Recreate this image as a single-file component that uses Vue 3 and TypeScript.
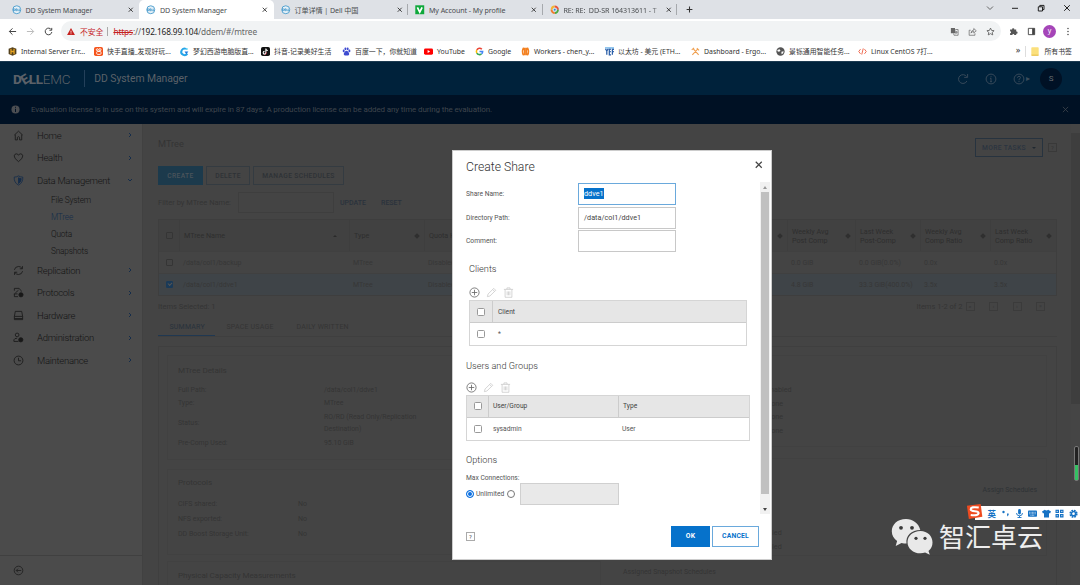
<script setup lang="ts">
interface Tab { kind: string; title: string; active?: boolean; sep?: boolean }
const tabs: Tab[] = [
  { kind: 'dell', title: 'DD System Manager' },
  { kind: 'dell', title: 'DD System Manager', active: true },
  { kind: 'dell', title: '订单详情 | Dell 中国', sep: true },
  { kind: 'v', title: 'My Account - My profile', sep: true },
  { kind: 'ring', title: 'RE: RE:  DD-SR 164313611 - T', sep: true },
]
interface Mark { kind: string; text: string; w: number }
const marks: Mark[] = [
  { kind: 'h', text: 'Internal Server Err...', w: 86 },
  { kind: 'ks', text: '快手直播_发现好玩...', w: 86 },
  { kind: 'c', text: '梦幻西游电脑版直...', w: 81 },
  { kind: 'tt', text: '抖音-记录美好生活', w: 81 },
  { kind: 'paw', text: '百度一下，你就知道', w: 82 },
  { kind: 'yt', text: 'YouTube', w: 51 },
  { kind: 'g', text: 'Google', w: 46 },
  { kind: 'w', text: 'Workers - chen_y...', w: 84 },
  { kind: 'yef', text: '以太坊 - 美元 (ETH...', w: 86 },
  { kind: 'pick', text: 'Dashboard - Ergo...', w: 85 },
  { kind: 'globe', text: '景铄通用智能任务...', w: 82 },
  { kind: 'code', text: 'Linux CentOS 7打...', w: 100 },
]
interface Nav { icon: string; label: string; open?: boolean; subs?: string[] }
const nav: Nav[] = [
  { icon: 'home', label: 'Home' },
  { icon: 'heart', label: 'Health' },
  { icon: 'shield', label: 'Data Management', open: true, subs: ['File System', 'MTree', 'Quota', 'Snapshots'] },
  { icon: 'sync', label: 'Replication' },
  { icon: 'proto', label: 'Protocols' },
  { icon: 'disk', label: 'Hardware' },
  { icon: 'admin', label: 'Administration' },
  { icon: 'clock', label: 'Maintenance' },
]
const rows = [
  { on: false, cells: ['/data/col1/backup', 'MTree', 'Disabled', '', '0.0 GiB', '0.0 GiB(0.0%)', '0.0x', '0.0x'] },
  { on: true, cells: ['/data/col1/ddve1', 'MTree', 'Disabled', '', '4.8 GiB', '33.3 GiB(400.0%)', '3.5x', '3.5x'] },
]
const heads = ['MTree Name', 'Type', 'Quota Hard', '', 'Weekly Avg\nPost Comp', 'Last Week\nPost-Comp', 'Weekly Avg\nComp Ratio', 'Last Week\nComp Ratio']
</script>

<template>
  <div class="screen">
    <div class="tabstrip">
      <div v-for="(t, i) in tabs" :key="i" class="tab" :class="{ active: t.active, sep: t.sep }">
        <svg class="fav" viewBox="0 0 10 10">
          <g v-if="t.kind === 'dell'"><circle cx="5" cy="5" r="4.2" fill="#e6f1f8" stroke="#3f97c9" stroke-width=".9" /><path d="M1.6 3.9v2.2q1.8 0 1.8-1.1T1.6 3.9M5.2 4H4v2h1.2M4 5h1M6 4v2h1M7.6 4v2h1" fill="none" stroke="#2e8bc4" stroke-width=".7" /></g>
          <g v-else-if="t.kind === 'v'"><rect x=".3" y=".3" width="9.4" height="9.4" fill="#0ea83b" /><path d="M2.5 2.4 5 7.4 7.5 2.4" fill="none" stroke="#fff" stroke-width="1.8" /></g>
          <g v-else fill="none" stroke-width="2"><path d="M1.7 5A3.4 3.4 0 0 1 5 1.6" stroke="#f2b632" /><path d="M5 1.6A3.4 3.4 0 0 1 8.4 5" stroke="#e8543c" /><path d="M8.4 5A3.4 3.4 0 0 1 5 8.4" stroke="#4ea83f" /><path d="M5 8.4A3.4 3.4 0 0 1 1.6 5" stroke="#ef7b2f" /><circle cx="5" cy="5" r="1.5" fill="#2e86d0" stroke="#cfe4f5" stroke-width="1" /></g>
        </svg>
        <span class="tabtitle" :class="{ fade: t.kind === 'ring' }">{{ t.title }}</span>
        <svg class="x" viewBox="0 0 6 6"><path d="M.8.8 5.2 5.2M5.2.8.8 5.2" /></svg>
      </div>
      <svg class="plus" viewBox="0 0 8 8"><path d="M4 .7v6.6M.7 4h6.6" /></svg>
      <div class="winbtns">
        <svg viewBox="0 0 10 10"><path d="M2 3.5 5 6.5 8 3.5" stroke="#666" /></svg>
        <svg viewBox="0 0 10 10"><path d="M2 5.3h6" /></svg>
        <svg viewBox="0 0 10 10"><path d="M2.3 3.8h4.2v4.2H2.3zM3.8 3.8V2.4H8v4.2H6.5" /></svg>
        <svg viewBox="0 0 10 10"><path d="M2.2 2.2 7.8 7.8M7.8 2.2 2.2 7.8" /></svg>
      </div>
    </div>

    <div class="toolbar">
      <svg class="tb" viewBox="0 0 10 10"><path d="M9 5H1.5M5 1.5 1.5 5 5 8.5" stroke="#444" /></svg>
      <svg class="tb" viewBox="0 0 10 10"><path d="M1 5h7.5M5 1.5 8.5 5 5 8.5" stroke="#bbb" /></svg>
      <svg class="tb" viewBox="0 0 10 10"><path d="M8.2 3A3.7 3.7 0 1 0 8.7 5.6M8.6 1v2.6H6" stroke="#444" /></svg>
      <div class="omni">
        <svg class="warn" viewBox="0 0 9 8"><path d="M4.5 0 9 8H0z" fill="#c5221f" /><path d="M4.5 3v2.4M4.5 6.1v1" stroke="#fff" stroke-width=".9" /></svg>
        <span class="unsafe">不安全</span><i class="bar"></i>
        <span class="url"><s>https</s>://<b>192.168.99.104</b>/ddem/#/mtree</span>
        <span class="grow"></span>
        <svg class="oi" viewBox="0 0 10 10"><path d="M1 1h4.5l.8 6H1z" fill="#666" /><path d="M6 2.8h3v6.4H4.5L4 7.2M2.3 4h2M7 4.5v1.2M5.8 5.7h2.6M7.9 5.7 6.2 8" stroke="#666" fill="none" stroke-width=".8" /></svg>
        <svg class="oi" viewBox="0 0 10 10"><path d="M3 3.6H1.3v5.6h6.4V7M3.3 6.8Q3.6 3.6 6.4 3.5V1.7L9.2 4.2 6.4 6.6V5Q4.2 5 3.3 6.8z" stroke="#666" fill="none" stroke-width=".8" /></svg>
        <svg class="oi" viewBox="0 0 10 10"><path d="m5 1.2 1.2 2.6 2.8.3-2.1 1.9.6 2.8L5 7.4 2.5 8.8l.6-2.8L1 4.1l2.8-.3z" stroke="#555" fill="none" stroke-width=".9" /></svg>
      </div>
      <svg class="ext" viewBox="0 0 10 10"><path d="M1.2 2.8h2.3a1.2 1.2 0 1 1 2.3 0H8v2.3a1.2 1.2 0 1 1 0 2.3V9H5.9a1.1 1.1 0 1 0-2.2 0H1.2V6.900a1.1 1.1 0 1 0 0-2.200z" fill="#555" /></svg>
      <svg class="side" viewBox="0 0 10 10"><path d="M1.5 1.5h7v7h-7z" fill="none" stroke="#444" /><path d="M5.7 1.5h2.8v7H5.7z" fill="#444" /></svg>
      <span class="avatar">y</span>
      <svg class="dots" viewBox="0 0 4 10"><circle cx="2" cy="1.6" r=".8" /><circle cx="2" cy="5" r=".8" /><circle cx="2" cy="8.4" r=".8" /></svg>
    </div>

    <div class="bookmarks">
      <div v-for="m in marks" :key="m.text" class="mark" :style="{ width: m.w + 'px' }">
        <svg viewBox="0 0 10 10">
          <g v-if="m.kind === 'h'"><path d="M5 .3 9.3 2v5.8L5 9.8.7 7.8V2z" fill="#53401c" /><path d="M3.3 2v6M6.7 2v6M3.3 5h3.4" stroke="#e8a623" stroke-width="1.4" /></g>
          <g v-else-if="m.kind === 'ks'"><rect width="10" height="10" rx="2" fill="#f5541c" /><circle cx="3.7" cy="3" r="1.1" fill="none" stroke="#fff" /><circle cx="6.6" cy="3" r="1.2" fill="none" stroke="#fff" /><rect x="3" y="5" width="4.8" height="3.2" rx="1" fill="none" stroke="#fff" /></g>
          <g v-else-if="m.kind === 'c'"><path d="M8.2 7.4A3.7 3.7 0 1 1 6.6 2" fill="none" stroke="#27a5e8" stroke-width="2.2" /><path d="M5 5h4.3L7 8" fill="#1a78e0" /><circle cx="7.5" cy="2.2" r="1.2" fill="#5bd0f5" /></g>
          <g v-else-if="m.kind === 'tt'"><rect width="10" height="10" rx="2" fill="#111" /><path d="M5.4 1.8v4.6a1.5 1.5 0 1 1-1.5-1.5M5.4 2q.3 1.8 2.2 1.9" fill="none" stroke="#fff" stroke-width="1.2" /><path d="M6 5.5v1.3a2 2 0 0 1-2 1.8" fill="none" stroke="#e8334f" stroke-width=".6" /></g>
          <g v-else-if="m.kind === 'paw'" fill="#3e4bd0"><ellipse cx="1.9" cy="4.4" rx="1.1" ry="1.5" /><ellipse cx="3.8" cy="2" rx="1.1" ry="1.5" /><ellipse cx="6.3" cy="2" rx="1.1" ry="1.5" /><ellipse cx="8.2" cy="4.4" rx="1.1" ry="1.5" /><path d="M5 4.3q1.4.1 2.8 2.5.8 2.6-1.3 2.6H3.5q-2.1 0-1.3-2.6Q3.6 4.4 5 4.3" /></g>
          <g v-else-if="m.kind === 'yt'"><rect y="1.6" width="10" height="6.9" rx="1.6" fill="#f00" /><path d="M4 3.4v3.2L6.8 5z" fill="#fff" /></g>
          <g v-else-if="m.kind === 'g'" fill="none" stroke-width="1.7"><path d="M7.6 2.5A3.5 3.5 0 0 0 2 3.3" stroke="#ea4335" /><path d="M2 3.3a3.6 3.6 0 0 0 0 3.4" stroke="#fbbc05" /><path d="M2 6.7a3.5 3.5 0 0 0 5.2 1" stroke="#34a853" /><path d="M7.2 7.7A3.3 3.3 0 0 0 8.5 5H5" stroke="#4285f4" /></g>
          <g v-else-if="m.kind === 'w'" fill="none" stroke="#f38020" stroke-width="1.8"><path d="M3 .8Q.2 5 3 9.200M7 .8Q9.800 5 7 9.200M4.100.8v8.400M6 .8v8.400" /></g>
          <g v-else-if="m.kind === 'yef'" fill="none" stroke="#2b5fa8" stroke-width="1.4"><path d="M.5 2 2 4.500 3.500 2M2 4.500v4.200M6.500 2.500H4.800v6.200h1.900M4.800 5.200h1.700M10 2.500H8.200v6.200M8.200 5.200h1.700" /><path d="M0 1h10" stroke="#6bb0e6" /></g>
          <g v-else-if="m.kind === 'pick'" fill="none" stroke="#f0a050" stroke-width="1.2"><path d="M1.5 8.8 7.6 2M8.5 8.8 2.6 2M.8 3.2 3.4.9M6.5 1.4 9 3.8" /></g>
          <g v-else-if="m.kind === 'globe'"><circle cx="5" cy="5" r="4.6" fill="#555" /><path d="M1.4 3.2 4 2.4 5 4 3.6 5.4 2 5zM6 5.2l2.5-.5-.6 2.3L6.2 8z" fill="#fff" /></g>
          <g v-else fill="none" stroke="#ef6b52" stroke-width="1.1"><path d="M2.8 2.4.8 5l2 2.6M7.2 2.4 9.2 5l-2 2.6M5.8 1.6 4.2 8.4" /></g>
        </svg>
        <span>{{ m.text }}</span>
      </div>
      <span class="grow"></span>
      <span class="more">»</span><i class="bsep"></i>
      <svg class="folder" viewBox="0 0 8 9"><rect x=".3" y=".3" width="7.4" height="8.4" rx=".8" fill="#fbe07c" /><path d="M.5 8.2h7" stroke="#e6bf4c" /></svg>
      <span class="all">所有书签</span>
    </div>

    <div class="app">
      <header class="top">
        <span class="dell">D<i>E</i>LL</span><span class="emc">EMC</span>
        <span class="vline"></span>
        <span class="product">DD System Manager</span>
        <span class="grow"></span>
        <svg class="h1" viewBox="0 0 12 12"><path d="M9.6 3.6A4.4 4.4 0 1 0 9.9 8M10.6 1v3.4H7.2" /></svg>
        <svg class="h2" viewBox="0 0 12 12"><circle cx="6" cy="6" r="4.9" /><path d="M6 5.2v3.5M6 3.2v1M5 8.7h2M5 5.3h1" /></svg>
        <svg class="h3" viewBox="0 0 12 12"><circle cx="6" cy="6" r="4.9" /><path d="M4.5 4.8q0-1.5 1.5-1.5t1.5 1.3Q7.500 5.500 6 6.300V7.200M6 8v1" /></svg>
        <span class="caret">▸</span>
        <span class="user">S</span>
      </header>
      <div class="notice">
        <svg viewBox="0 0 10 10"><circle cx="5" cy="5" r="4.5" fill="#4b4e52" /><path d="M5 4.2v3.6M5 2v1.1" stroke="#001125" stroke-width="1.1" /></svg>
        <span>Evaluation license is in use on this system and will expire in 87 days. A production license can be added any time during the evaluation.</span>
        <svg class="nx" viewBox="0 0 8 8"><path d="M1 1l6 6M7 1 1 7" /></svg>
      </div>

      <div class="body">
        <nav class="sidebar">
          <template v-for="n in nav" :key="n.label">
            <div class="item">
              <svg class="ni" :class="{ blue: n.icon === 'shield' }" viewBox="0 0 12 12">
                <path v-if="n.icon === 'home'" d="M1.500 5.500 6 1.300l4.500 4.200M2.500 5v5.800h2.300V8q1.200-1.500 2.400 0v2.800h2.300V5" />
                <path v-else-if="n.icon === 'heart'" d="M6 10.500Q1 6.800 1.300 4.200 1.800 1.800 4 2q1.400.2 2 1.600Q6.600 2.200 8 2q2.200-.2 2.700 2.200Q11 6.800 6 10.500z" />
                <g v-else-if="n.icon === 'shield'"><path d="M6 1q2 1.300 4.700 1.300Q11 8.500 6 11 1 8.500 1.300 2.300 4 2.300 6 1z" /><path d="M6 3q1.500.9 3 1Q9 7.500 6 9.300z" fill="#142c4a" /></g>
                <path v-else-if="n.icon === 'sync'" d="M1.500 5.300Q2.300 1.700 6 1.600q2.500 0 3.900 2.200M10.300 1.200v2.900H7.400M10.500 6.700Q9.700 10.300 6 10.400q-2.500 0-3.900-2.200M1.700 10.800V7.900h2.900" />
                <g v-else-if="n.icon === 'proto'"><path d="M1.500 4V1.500h5L9 4v1M1.500 10.500h4M1.500 7.500v3M2.500 6.500 6 3.500M1 7.500h4" /><circle cx="8.700" cy="8.500" r="2.300" fill="#181818" /></g>
                <path v-else-if="n.icon === 'disk'" d="M2.500 1.500h7l1 5.500v3.500h-9V7zM1.500 7h9M1.500 9.300h9" />
                <g v-else-if="n.icon === 'admin'"><circle cx="4.500" cy="3.200" r="2" /><path d="M1 10.300V8.500Q1.500 6.800 4.500 6.800M1 10.300h5" /><circle cx="8.500" cy="8.500" r="2.300" fill="#181818" /></g>
                <g v-else><circle cx="6" cy="6" r="4.800" /><path d="M6 3v3.300h2.800" /></g>
              </svg>
              <span>{{ n.label }}</span>
              <svg class="chev" viewBox="0 0 6 6"><path :d="n.open ? 'M1 2 3 4 5 2' : 'M2 1 4 3 2 5'" /></svg>
            </div>
            <div v-if="n.subs" class="subs">
              <div v-for="s in n.subs" :key="s" :class="{ cur: s === 'MTree' }">{{ s }}</div>
            </div>
          </template>
          <span class="grow"></span>
          <div class="collapse"><svg viewBox="0 0 12 12"><circle cx="6" cy="6" r="4.700" /><path d="M9 6H3.500M5.500 4l-2 2 2 2" /></svg></div>
        </nav>

        <main class="main">
          <div class="headrow"><span class="h">MTree</span><span class="grow"></span><span class="btn tasks">MORE TASKS <i class="dn"></i></span><span class="hq">?</span></div>
          <div class="btns"><span class="btn create">CREATE</span><span class="btn del">DELETE</span><span class="btn sched">MANAGE SCHEDULES</span></div>
          <div class="filter"><span class="fl">Filter by MTree Name:</span><span class="fi"></span><b class="b1">UPDATE</b><b>RESET</b></div>
          <div class="grid">
            <div class="gr gh"><span class="ck"><i></i></span><span v-for="(h, i) in heads" :key="i" class="gc">{{ h }}<em :class="{ asc: i === 0 }"></em></span></div>
            <div v-for="r in rows" :key="r.cells[0]" class="gr" :class="{ sel: r.on }">
              <span class="ck"><i :class="{ on: r.on }"></i></span><span v-for="(c, i) in r.cells" :key="i" class="gc">{{ c }}</span>
            </div>
          </div>
          <div class="pager"><span>Items Selected: 1</span><span class="grow"></span><span>Items 1-2 of 2</span><i>«</i><i>‹</i><i>›</i><i>»</i></div>
          <div class="subtabs"><span class="on">SUMMARY</span><span>SPACE USAGE</span><span>DAILY WRITTEN</span></div>
          <div class="panel">
            <div class="col">
              <section class="card c1">
                <h4>MTree Details</h4>
                <dl>
                  <dt>Full Path:</dt><dd>/data/col1/ddve1</dd>
                  <dt>Type:</dt><dd>MTree</dd>
                  <dt>Status:</dt><dd>RO/RD (Read Only/Replication<br />Destination)</dd>
                  <dt>Pre-Comp Used:</dt><dd>95.10 GiB</dd>
                </dl>
              </section>
              <section class="card c2">
                <h4>Protocols</h4>
                <dl>
                  <dt>CIFS shared:</dt><dd>No</dd>
                  <dt>NFS exported:</dt><dd>No</dd>
                  <dt>DD Boost Storage Unit:</dt><dd>No</dd>
                </dl>
              </section>
              <section class="card c3"><h4>Physical Capacity Measurements</h4></section>
            </div>
            <div class="col right">
              <section class="card r1"><p>Enabled</p><p>None</p><p>None</p><p>None</p></section>
              <section class="card r2"><div class="assign">Assign Schedules</div><p>Disabled</p><p>Disabled</p></section>
              <div class="snap">Assigned Snapshot Schedules</div>
            </div>
          </div>
        </main>
        <div class="pagescroll"><i></i></div>
      </div>
    </div>

    <div class="modal">
      <div class="mh"><span>Create Share</span><svg viewBox="0 0 8 8"><path d="M.8.8l6.400 6.400M7.200.8.8 7.200" /></svg></div>
      <div class="mb">
        <div class="form">
          <div class="f"><label>Share Name:</label><div class="in focus"><mark>ddve1</mark></div></div>
          <div class="f"><label>Directory Path:</label><div class="in">/data/col1/ddve1</div></div>
          <div class="f"><label>Comment:</label><div class="in"></div></div>
          <div class="sec clients">
            <h3>Clients</h3>
            <div class="tools">
              <svg viewBox="0 0 12 12"><circle cx="6" cy="6" r="5" /><path d="M6 3v6M3 6h6" /></svg>
              <svg class="off" viewBox="0 0 12 12"><path d="M1.500 10.500 2.200 7.700 8.500 1.500 10.600 3.600 4.300 9.800zM7.300 2.800l2 2" /></svg>
              <svg class="off" viewBox="0 0 12 12"><path d="M1 2.600h10M2.300 2.600v8.600h7.400V2.600M4.300 2.400V1h3.400v1.400M4.500 4.800v4.300M6 4.800v4.300M7.500 4.800v4.300" /></svg>
            </div>
            <div class="tbl">
              <div class="th"><span class="c"><i></i></span><span>Client</span></div>
              <div class="tr"><span class="c"><i></i></span><span>*</span></div>
            </div>
          </div>
          <div class="sec users">
            <h3>Users and Groups</h3>
            <div class="tools">
              <svg viewBox="0 0 12 12"><circle cx="6" cy="6" r="5" /><path d="M6 3v6M3 6h6" /></svg>
              <svg class="off" viewBox="0 0 12 12"><path d="M1.500 10.500 2.200 7.700 8.500 1.500 10.600 3.600 4.300 9.800zM7.300 2.800l2 2" /></svg>
              <svg class="off" viewBox="0 0 12 12"><path d="M1 2.600h10M2.300 2.600v8.600h7.400V2.600M4.300 2.400V1h3.400v1.400M4.500 4.800v4.300M6 4.800v4.300M7.500 4.800v4.300" /></svg>
            </div>
            <div class="tbl">
              <div class="th"><span class="c"><i></i></span><span class="w">User/Group</span><span class="ty">Type</span></div>
              <div class="tr"><span class="c"><i></i></span><span class="w">sysadmin</span><span class="ty">User</span></div>
            </div>
          </div>
          <h3 class="opt">Options</h3>
          <div class="max">Max Connections:</div>
          <div class="radios"><i class="ra on"></i><span>Unlimited</span><i class="ra"></i><div class="dis"></div></div>
        </div>
        <div class="sb"><i class="up"></i><i class="thumb"></i><i class="down"></i></div>
      </div>
      <div class="mf"><span class="q">?</span><span class="grow"></span><span class="ok">OK</span><span class="cancel">CANCEL</span></div>
    </div>

    <div class="level"><i></i></div>
    <div class="ime">
      <svg class="s" viewBox="0 0 18 17"><path d="M1 2.500 15.500.5 17.300 14 3 16.500z" fill="#ef4b20" /><path d="M13.500 4.300Q5 3 5 6.200q0 1.800 4.300 2 4.400.3 4 2.300-.8 2.700-8.300 1.800" fill="none" stroke="#fff" stroke-width="2.200" /></svg>
      <b>英</b>
      <svg viewBox="0 0 9 9"><circle cx="2.500" cy="3" r="1.200" /><path d="M6 4.500h1.600v1.400L6.300 7.500z" /></svg>
      <svg viewBox="0 0 9 9"><rect x="3.100" y="0" width="2.800" height="5.500" rx="1.400" /><path d="M1.500 4q0 2.800 3 2.800t3-2.800M4.500 6.800v1.700M2.500 8.500h4" fill="none" stroke="#1672c4" stroke-width=".9" /></svg>
      <svg viewBox="0 0 9 9"><rect y="1.500" width="9" height="6.200" rx=".8" /><path d="M1.200 3.300h6.600M1.200 4.800h6.600M2.500 6.300h4" stroke="#fff" stroke-width=".7" stroke-dasharray=".9 .5" /></svg>
      <svg viewBox="0 0 9 9"><path d="M2.800.8Q4.500 2.200 6.200.8L9 2.500 8 4.500 7 4v4.500H2V4l-1 .5-1-2z" /></svg>
      <svg viewBox="0 0 9 9"><path d="M.5.700h3.500v3.300H.5zM5 .7h3.500v3.300H5zM.5 5h3.500v3.500H.5zM5 5h3.500v3.500H5z" /><path d="M1.500 2.400h1.500M6 2.400h1.500M1.500 6.700h1.500M6 6.700h1.500" stroke="#fff" stroke-width=".7" /></svg>
      <svg viewBox="0 0 9 9"><circle cx="4.500" cy="4.700" r="3.300" fill="none" stroke="#1672c4" stroke-width="1.600" stroke-dasharray="1.700 .9" /><circle cx="4.500" cy="4.700" r="2.100" fill="none" stroke="#1672c4" stroke-width="1.500" /></svg>
    </div>
    <div class="brand">
      <svg viewBox="0 0 42 37"><path d="M15 1C6.500 1 .8 6.500.8 13.300c0 4.100 2 7.300 5.300 9.600L4.700 28l5.800-3.100q2.500.7 5 .7C14.500 17.500 20.500 12 29.300 12 27.500 5 21.800 1 15 1z" fill="#e9e9e9" /><path d="M29.500 13C21.800 13 16.500 18 16.500 24.200S22 35.300 29.500 35.300q2.500 0 4.600-.7L38.800 36.800 37.500 33q4-3.300 4-8.600C41.500 18 36.500 13 29.500 13z" fill="#e9e9e9" /><g fill="#3a3a3a"><circle cx="10" cy="9.800" r="1.900" /><circle cx="21" cy="9.800" r="1.900" /><circle cx="25" cy="20.300" r="1.600" /><circle cx="34" cy="20.300" r="1.600" /></g></svg>
      <span>智汇卓云</span>
    </div>
  </div>
</template>

<style>
html, body { margin: 0; overflow: hidden; background: #444; }
</style>
<style scoped>
* { box-sizing: border-box; }
.screen { position: relative; width: 1080px; height: 585px; overflow: hidden; display: flex; flex-direction: column; font-family: Roboto, "Noto Sans CJK SC", sans-serif; white-space: nowrap; }
i, em { font-style: normal; }
svg { flex: none; display: block; overflow: visible; }
.grow { flex: 1; }
.tabstrip, .toolbar, .bookmarks { font-family: "Noto Sans", "Noto Sans CJK SC", sans-serif; }
.tabstrip { height: 19px; flex: none; background: #dee1e6; display: flex; align-items: center; padding-left: 4.500px; }
.tab { width: 134.500px; height: 19px; display: flex; align-items: center; padding: 0 6px 0 7px; position: relative; font-size: 7.100px; letter-spacing: -.08px; color: #4a4d50; }
.tab.active { background: #fff; border-radius: 5px 5px 0 0; }
.tab.sep { border-right: 1px solid #a6a9ad; height: 11px; padding-right: 5px; }
.fav { width: 9.500px; height: 9.500px; margin-right: 4.500px; }
.tabtitle { flex: 1; white-space: pre; }
.fade { -webkit-mask-image: linear-gradient(90deg, #000 86%, transparent 98%); mask-image: linear-gradient(90deg, #000 86%, transparent 98%); }
.x { width: 5.500px; height: 5.500px; stroke: #333; fill: none; stroke-width: 1; }
.plus { width: 7px; height: 7px; margin-left: 9px; stroke: #333; stroke-width: 1.200; }
.winbtns { margin: -3px 8px 0 auto; display: flex; gap: 15.800px; }
.winbtns svg { width: 10px; height: 10px; fill: none; stroke: #222; stroke-width: 1; }
.toolbar { height: 22px; flex: none; background: #fff; display: flex; align-items: center; padding: 2px 0 0 8px; }
.tb { width: 9px; height: 9px; margin-right: 9px; fill: none; stroke-width: 1.100; }
.omni { width: 940px; height: 20px; margin-left: -1px; border-radius: 10px; background: #f1f3f4; display: flex; align-items: center; padding: 0 6px; }
.warn { width: 8px; height: 7px; }
.unsafe { margin-left: 5px; font-size: 7.800px; color: #c5221f; }
.bar { width: 1px; height: 9px; background: #aaa; margin: 0 5px 0 4px; }
.url { font-size: 8.300px; letter-spacing: -.13px; color: #666; }
.url b { font-weight: 400; color: #222; }
.url s { color: #c5221f; }
.oi { width: 9px; height: 9px; margin-left: 9px; }
.ext { width: 9px; height: 9px; margin-left: 8px; }
.side { width: 9px; height: 9px; margin-left: 9px; }
.avatar { width: 13px; height: 13px; border-radius: 50%; background: #a545b8; color: #fff; font-size: 7px; line-height: 12px; text-align: center; margin-left: 7px; }
.dots { width: 4px; height: 9px; margin-left: 10px; fill: #444; }
.bookmarks { height: 20px; flex: none; background: #fff; display: flex; align-items: center; padding: 0 8px; font-size: 6.900px; color: #333; }
.mark { display: flex; align-items: center; flex: none; }
.mark svg { width: 9px; height: 9px; margin-right: 4px; }
.more { font-size: 9px; margin-top: -3px; }
.bsep { width: 1px; height: 11px; background: #ddd; margin: 0 5px 0 5px; }
.folder { width: 8px; height: 9px; margin-right: 5px; }

.app { flex: 1; min-height: 0; display: flex; flex-direction: column; }
.top { height: 34px; flex: none; background: #00223b; display: flex; align-items: center; padding: 0 18px 0 13px; color: #5b6168; border-top: 1px solid #1c3a50; }
.dell { font-weight: 800; font-size: 13.500px; letter-spacing: -.3px; display: flex; }
.dell i { transform: rotate(-32deg); }
.emc { font-weight: 300; font-size: 13.500px; letter-spacing: -.2px; }
.vline { width: 1px; height: 17px; background: #23405a; margin: 0 9px 0 14px; }
.product { font-size: 10.400px; letter-spacing: -.06px; }
.top svg { width: 12px; height: 12px; fill: none; stroke: #3c4d5c; stroke-width: .9; }
.h1 { margin-right: 16px; } .h2 { margin-right: 16px; } .h3 { margin-right: 1px; }
.caret { font: 8px "DejaVu Sans"; color: #3c4d5c; width: 8px; margin-right: 6px; }
.user { width: 22px; height: 22px; border-radius: 50%; background: #001125; font-size: 8px; line-height: 22px; text-align: center; color: #666b70; }
.notice { height: 29px; flex: none; background: #001124; display: flex; align-items: center; padding: 0 11px; font-size: 8px; letter-spacing: -.117px; color: #3f454c; }
.notice span { margin-left: 11px; flex: 1; }
.notice svg { width: 9px; height: 9px; }
.notice .nx { width: 7px; height: 7px; stroke: #3f454c; stroke-width: .9; }
.body { flex: 1; min-height: 0; display: flex; background: #444; }
.sidebar { width: 143px; flex: none; background: #4b4b4b; display: flex; flex-direction: column; padding-top: 0; border-right: 1px solid #414141; color: #141414; }
.item { height: 22.500px; flex: none; display: flex; align-items: center; padding: 0 9px 0 13px; font-size: 9.500px; letter-spacing: -.28px; font-weight: 300; }
.item span { flex: 1; margin-left: 13px; }
.ni { width: 11px; height: 11px; fill: none; stroke: #181818; stroke-width: .9; }
.ni.blue { stroke: #142c4a; }
.chev { width: 6px; height: 6px; fill: none; stroke: #142c4a; stroke-width: 1; }
.subs { padding: 0 0 1px 51px; font-size: 8.300px; letter-spacing: -.2px; line-height: 17px; font-weight: 300; height: 67.500px; flex: none; }
.subs .cur { color: #142c4a; }
.collapse { height: 30px; flex: none; border-top: 1px solid #404040; padding: 9px 0 0 13px; }
.collapse svg { width: 11px; height: 11px; fill: none; stroke: #222; }
.main { flex: 1; padding: 11px 14px 0 15px; min-width: 0; font-size: 7.500px; color: #343434; display: flex; flex-direction: column; }
.main > * { flex: none; }
.headrow { height: 24px; display: flex; align-items: center; padding-top: 1px; }
.h { font-size: 9.200px; margin-top: -8px; }
.btn { display: flex; align-items: center; justify-content: center; height: 19px; border: 1px solid #343b41; font-size: 6.700px; font-weight: 500; color: #2e3236; letter-spacing: .36px; }
.tasks { width: 68px; border-color: #27333f; color: #2b3440; }
.dn { border: 2px solid transparent; border-top: 2.500px solid #202830; border-bottom: 0; margin-left: 6px; }
.hq { width: 9px; height: 9px; border: 1px solid #393939; margin: 0 0 0 5px; font-size: 6px; line-height: 7px; text-align: center; }
.btns { display: flex; gap: 3px; margin-top: 7px; }
.create { width: 45px; background: #1c3a4c; border-color: #1c3a4c; color: #4b545b; }
.del { width: 44px; } .sched { width: 91px; }
.filter { display: flex; align-items: center; height: 21px; margin-top: 7px; }
.fl { width: 80px; font-size: 7.500px; }
.fi { width: 96px; height: 21px; border: 1px solid #3e3e3e; margin-right: 6px; }
.filter b { color: #2a323c; font-weight: 500; font-size: 7px; }
.filter .b1 { width: 41px; }
.grid { margin-top: 6px; border: 1px solid #3e3e3e; }
.gr { display: grid; grid-template-columns: 20px 170px 75px 94px 269px 68px 65px 70px 1fr; height: 22px; align-items: center; font-size: 7px; color: #373737; }
.gh { height: 31px; background: #414141; color: #2e2e2e; line-height: 9px; font-size: 7.200px; }
.gr + .gr { border-top: 1px solid #404040; }
.sel { background: #3f4448; }
.gc { padding-left: 4px; white-space: pre; height: 100%; display: flex; align-items: center; position: relative; min-width: 0; }
.gh .gc { border-left: 1px solid #3e3e3e; }
.gc em { width: 4px; height: 4px; background: #2f2f2f; transform: rotate(45deg); margin: 0 5px 0 auto; }
.gc em.asc { width: 0; height: 0; background: none; border: 2px solid transparent; border-bottom-color: #2a2a2a; border-top: 0; transform: none; margin-right: 12px; }
.ck { display: flex; justify-content: center; }
.ck i { width: 7px; height: 7px; border: 1px solid #353535; border-radius: 1px; }
.ck i.on { background: #1a3a58; border-color: #1a3a58; position: relative; }
.ck i.on::after { content: ""; position: absolute; left: 1px; top: 0; width: 3px; height: 2px; border: solid #555; border-width: 0 0 1px 1px; transform: rotate(-45deg); }
.pager { display: flex; align-items: center; height: 21px; padding-right: 12px; font-size: 7.500px; padding-bottom: 1px; }
.pager i { width: 9px; height: 9px; border: 1px solid #3b3b3b; font-size: 6px; line-height: 6px; text-align: center; margin-left: 14.500px; }
.pager span + i { margin-left: 3px; }
.subtabs { height: 20px; border-bottom: 1px solid #3f3f3f; display: flex; font-size: 7px; line-height: 21px; letter-spacing: .2px; }
.subtabs span { padding: 0 11.500px; }
.subtabs .on { width: 57px; border-bottom: 1.500px solid #203851; color: #28323c; }
.panel { margin-top: 9px; height: 260px; border: 1px solid #3f3f3f; display: flex; gap: 12px; padding: 8px 9px 0 8px; }
.col { flex: 1; }
.card { border: 1px solid #414141; padding: 8px 0 0 10px; }
h4 { margin: 0; font-size: 8.100px; letter-spacing: -.06px; font-weight: 400; line-height: 12px; }
dl { margin: 0; display: grid; grid-template-columns: 146px 1fr; align-items: center; }
dd { margin: 0; }
.c1 { height: 105px; }
.c1 dl { margin-top: 7px; grid-template-rows: 13.500px 13.500px 26px 13.500px; line-height: 12.500px; font-size: 6.900px; }
.c2 { height: 86px; margin-top: 9px; padding-top: 6px; }
.c2 dl { grid-template-columns: 120px 1fr; line-height: 15px; margin-top: 9px; font-size: 7px; }
.c3 { margin-top: 6px; height: 40px; padding-top: 7px; }
.r1 { height: 92px; padding: 27px 0 0 152px; font-size: 7.200px; }
p { margin: 0; line-height: 13.500px; }
.r2 { height: 98px; margin-top: 11px; padding: 0 0 0 140px; font-size: 7.200px; }
.r2 .assign { text-align: right; padding: 23px 9px 0 0; height: 67px; line-height: 16px; color: #2e3235; font-size: 6.900px; }
.snap { padding: 12px 0 0 10px; font-size: 6.900px; }
.pagescroll { width: 9px; flex: none; background: #454545; padding-top: 9px; }
.pagescroll i { display: block; width: 9px; height: 271px; background: #3e3e3e; }

.modal { position: absolute; left: 452px; top: 150px; width: 320px; height: 410px; background: #fff; border: 1px solid #ccc; display: flex; flex-direction: column; color: #555; }
.mh { height: 31px; flex: none; display: flex; justify-content: space-between; padding: 7px 9px 0 13px; font-size: 12.200px; font-weight: 300; line-height: 19px; color: #333; }
.mh svg { width: 7.500px; height: 7.500px; margin-top: 3px; stroke: #444; stroke-width: 1.300; }
.mb { display: flex; height: 332px; flex: none; }
.form { width: 307px; padding-left: 13px; padding-top: 1px; font-size: 6.700px; }
.f { display: flex; height: 23.600px; }
.f label { width: 112px; line-height: 22px; }
.in { width: 98px; height: 22px; border: 1px solid #c8c8c8; line-height: 20px; padding-left: 5px; font-size: 7.200px; letter-spacing: .06px; color: #444; }
.in.focus { border: 1.500px solid #6aa9dc; line-height: 19px; }
mark { background: #0672cb; color: #fff; padding: 1px 0; }
h3 { margin: 0; font-size: 9.200px; font-weight: 300; line-height: 12px; color: #333; }
.clients { margin-left: 3px; padding-top: 9.500px; }
.tools { display: flex; gap: 6px; align-items: center; height: 11px; }
.clients .tools { margin: 12px 0 2px; }
.tools svg { width: 11px; height: 11px; fill: none; stroke: #666; stroke-width: .9; }
.tools .off { stroke: #ccc; }
.tbl { width: 278px; border: 1px solid #d5d5d5; font-size: 6.700px; }
.th, .tr { display: flex; align-items: center; height: 22px; }
.th { background: #e6e6e6; border-bottom: 1px solid #ccc; color: #444; }
.th .c { border-right: 1px solid #ccc; }
.c { width: 23px; height: 100%; display: flex; align-items: center; justify-content: center; margin-right: 5px; }
.tr .c { padding-right: 1px; }
.c i { width: 8px; height: 8px; border: 1px solid #999; border-radius: 1.500px; background: #fff; }
.users { padding-top: 14px; }
.users .tools { margin: 9.500px 0 2px; }
.users .tbl { width: 284px; }
.users .c { width: 22px; margin-right: 4px; }
.w { width: 125px; }
.ty { height: 100%; display: flex; align-items: center; padding-left: 4px; }
.th .ty { border-left: 1px solid #ccc; }
.opt { margin-top: 13.500px; }
.max { line-height: 10px; margin-top: 7px; }
.radios { display: flex; align-items: center; margin-top: 0; height: 22px; }
.ra { width: 8px; height: 8px; border: 1px solid #777; border-radius: 50%; }
.ra.on { border-color: #0a6fe0; background: #0a6fe0; box-shadow: inset 0 0 0 1px #fff; }
.radios span { margin: 0 3px 0 2px; }
.dis { width: 99px; height: 22px; background: #e9e9e9; border: 1px solid #d0d0d0; margin-left: 5px; }
.sb { width: 10px; background: #f1f1f1; display: flex; flex-direction: column; align-items: center; }
.up { border: 2px solid transparent; border-top: 0; border-bottom: 3px solid #999; margin: 4px 0 3px; }
.thumb { width: 8px; height: 302px; background: #c0c0c0; }
.down { border: 2.500px solid transparent; border-bottom: 0; border-top: 3px solid #444; margin-top: 14px; }
.mf { display: flex; align-items: center; padding: 11px 13px 0 13px; height: 33px; }
.mf { padding-right: 12px; }
.q { width: 9px; height: 9px; border: 1px solid #aaa; font-size: 6px; line-height: 7px; text-align: center; }
.ok, .cancel { height: 21px; line-height: 20px; font-size: 6.800px; font-weight: 700; text-align: center; letter-spacing: .2px; }
.ok { width: 39px; background: #0672cb; color: #fff; margin-right: 2px; }
.cancel { width: 47px; border: 1px solid #6aa9dc; color: #0672cb; line-height: 18px; }

.level { position: absolute; left: 1074px; top: 446px; width: 5px; height: 35px; background: #222; border: 1px solid #777; border-radius: 2px; display: flex; align-items: flex-end; }
.level i { width: 100%; height: 15px; background: #35c163; }
.ime { position: absolute; left: 966px; top: 506px; width: 114px; height: 14px; background: linear-gradient(90deg, transparent 9px, #fff 9px); display: flex; align-items: center; gap: 4.500px; fill: #1672c4; }
.ime svg { width: 9px; height: 9px; }
.ime .s { width: 17px; height: 17px; margin: -3px 0 0 0; }
.ime b { font: 700 8.500px/14px "Noto Sans CJK SC"; color: #1672c4; width: 9px; }
.brand { position: absolute; left: 891px; top: 516px; display: flex; align-items: center; gap: 6px; color: #eee; font: 26px/40px "Noto Sans CJK SC"; }
.brand svg { width: 42px; height: 37px; }
</style>
